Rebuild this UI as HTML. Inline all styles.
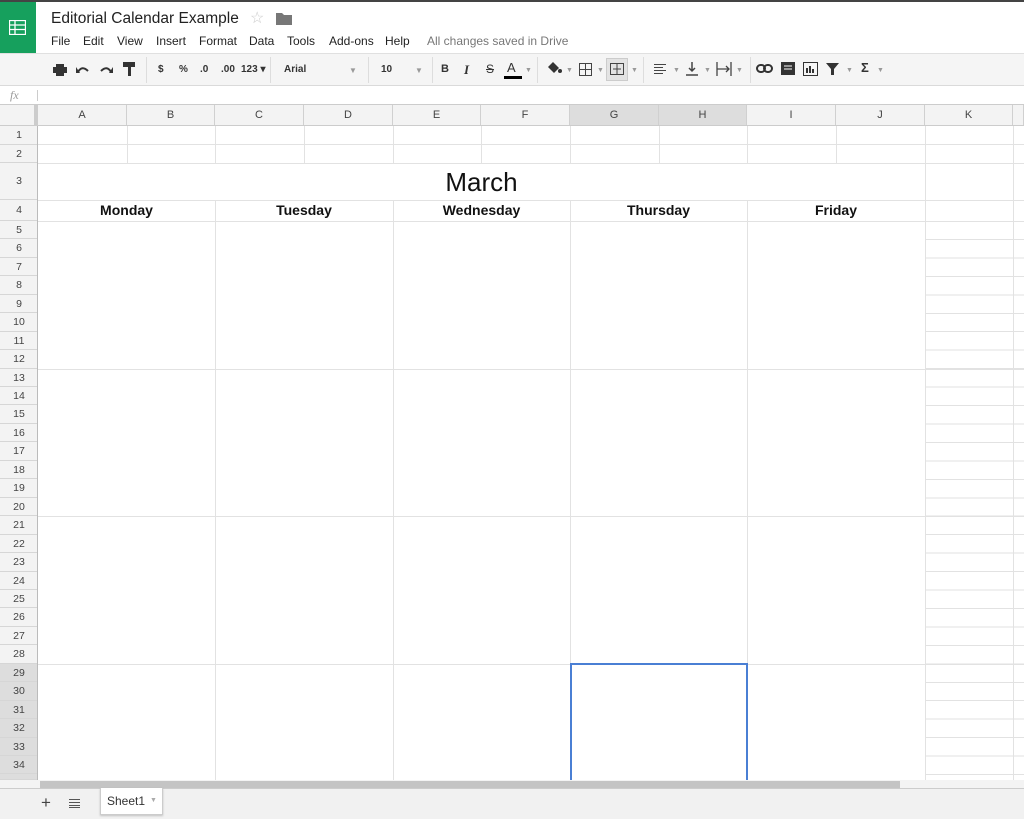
<!DOCTYPE html>
<html><head><meta charset="utf-8">
<style>
*{margin:0;padding:0;box-sizing:border-box}
body{width:1024px;height:819px;overflow:hidden;background:#fff;font-family:"Liberation Sans",Arial,sans-serif;position:relative}
.a{position:absolute}
.hl{position:absolute;height:1px;background:#e2e2e2}
.vl{position:absolute;width:1px;background:#e2e2e2}
.ch{position:absolute;top:105px;height:21px;font-size:11px;color:#444;text-align:center;line-height:21px;border-right:1px solid #d0d0d0;background:#f3f3f3}
.rh{position:absolute;left:0;width:38px;font-size:10.5px;color:#444;text-align:center;border-bottom:1px solid #d6d6d6;background:#f3f3f3}
.rh.s{background:#ddd}
.tb{position:absolute;top:62px;font-size:11px;color:#333}
.mn{position:absolute;top:34px;font-size:12px;color:#222}
.sep{position:absolute;top:57px;width:1px;height:26px;background:#ddd}
.day{position:absolute;top:200px;height:21px;line-height:21px;font-size:14px;font-weight:bold;text-align:center;color:#111}
</style></head><body>
<div class="a" style="left:0;top:0;width:1024px;height:2px;background:#444"></div>
<div class="a" style="left:0;top:2px;width:36px;height:51px;background:#16a05d"></div>
<svg class="a" style="left:9px;top:20px" width="17" height="15" viewBox="0 0 17 15"><rect x="0.5" y="0.5" width="16" height="14" fill="none" stroke="#fff" stroke-width="1.3"/><path d="M0.5 5H16.5M0.5 9.5H16.5M6 0.5V14.5" stroke="#fff" stroke-width="1.3"/></svg>
<div class="a" style="left:51px;top:10px;font-size:15.5px;color:#222">Editorial Calendar Example</div>
<div class="a" style="left:250px;top:8px;font-size:16px;color:#ccc">☆</div>
<svg class="a" style="left:276px;top:12px" width="16" height="13"><path d="M0 1h6l2 2h8v10H0z" fill="#777"/></svg>
<div class="mn" style="left:51px">File</div><div class="mn" style="left:83px">Edit</div><div class="mn" style="left:117px">View</div><div class="mn" style="left:156px">Insert</div><div class="mn" style="left:199px">Format</div><div class="mn" style="left:249px">Data</div><div class="mn" style="left:287px">Tools</div><div class="mn" style="left:329px">Add-ons</div><div class="mn" style="left:385px">Help</div><div class="mn" style="left:427px;color:#777">All changes saved in Drive</div>
<div class="a" style="left:0;top:53px;width:1024px;height:33px;background:#f5f5f5;border-top:1px solid #e0e0e0;border-bottom:1px solid #dadada"></div>
<svg class="a" style="left:53px;top:64px" width="14" height="12"><rect x="3" y="0" width="8" height="3" fill="#333"/><rect x="0" y="3" width="14" height="6" fill="#333"/><rect x="3" y="7" width="8" height="5" fill="#333"/></svg>
<svg class="a" style="left:76px;top:64px" width="14" height="10"><path d="M2 8Q6 1 12 7" stroke="#333" stroke-width="2" fill="none"/><path d="M0 3l4 6H0z" fill="#333"/></svg>
<svg class="a" style="left:99px;top:64px" width="14" height="10"><path d="M12 8Q8 1 2 7" stroke="#333" stroke-width="2" fill="none"/><path d="M14 3l-4 6h4z" fill="#333"/></svg>
<svg class="a" style="left:123px;top:62px" width="13" height="15"><rect x="0" y="0" width="12" height="5" fill="#333"/><rect x="5" y="5" width="3" height="9" fill="#333"/></svg>
<div class="sep" style="left:146px"></div>
<div class="tb" style="left:158px;font-weight:bold;font-size:10px;top:64px">$</div><div class="tb" style="left:179px;font-weight:bold;font-size:10px;top:64px">%</div><div class="tb" style="left:200px;font-weight:bold;font-size:10px;top:64px">.0</div><div class="tb" style="left:221px;font-weight:bold;font-size:10px;top:64px">.00</div><div class="tb" style="left:241px;font-weight:bold;font-size:10px;top:64px">123 ▾</div>
<div class="sep" style="left:270px"></div>
<div class="tb" style="left:284px;font-size:10px;font-weight:bold;top:64px">Arial</div><div class="tb" style="left:349px;font-size:8px;color:#999;top:66px">▼</div>
<div class="sep" style="left:368px"></div>
<div class="tb" style="left:381px;font-size:10px;font-weight:bold;top:64px">10</div><div class="tb" style="left:415px;font-size:8px;color:#999;top:66px">▼</div>
<div class="sep" style="left:432px"></div>
<div class="tb" style="left:441px;font-weight:bold;top:63px">B</div><div class="tb" style="left:464px;font-style:italic;font-weight:bold;font-family:'Liberation Serif';font-size:13px;top:62px">I</div><div class="tb" style="left:486px;text-decoration:line-through;top:62px;font-size:12px">S</div>
<div class="tb" style="left:507px;font-size:13px;top:60px">A</div><div class="a" style="left:504px;top:76px;width:18px;height:3px;background:#000"></div><div class="tb" style="left:525px;font-size:7px;color:#999;top:67px">▼</div>
<div class="sep" style="left:537px"></div>
<svg class="a" style="left:546px;top:61px" width="16" height="14"><path d="M2 6l5-5 6 6-5 5z" fill="#333"/><circle cx="14" cy="10" r="2" fill="#333"/></svg><div class="tb" style="left:566px;font-size:7px;color:#999;top:67px">▼</div>
<svg class="a" style="left:579px;top:63px" width="13" height="13"><path d="M.5.5h12v12H.5zM6.5.5v12M.5 6.5h12" fill="none" stroke="#444"/></svg><div class="tb" style="left:597px;font-size:7px;color:#999;top:67px">▼</div>
<div class="a" style="left:606px;top:58px;width:22px;height:23px;background:#e3e3e3;border:1px solid #ccc"></div>
<svg class="a" style="left:610px;top:63px" width="14" height="12"><path d="M.5.5h13v11H.5zM7 .5v11" fill="none" stroke="#444"/><path d="M3 6h8" stroke="#444"/></svg><div class="tb" style="left:631px;font-size:7px;color:#999;top:67px">▼</div>
<div class="sep" style="left:643px"></div>
<svg class="a" style="left:654px;top:64px" width="12" height="10"><path d="M0 .5h12M0 3.5h9M0 6.5h12M0 9.5h9" stroke="#444"/></svg><div class="tb" style="left:673px;font-size:7px;color:#999;top:67px">▼</div>
<svg class="a" style="left:686px;top:62px" width="12" height="14"><path d="M6 0v9M3 6l3 3 3-3M0 13h12" stroke="#444" fill="none" stroke-width="1.5"/></svg><div class="tb" style="left:704px;font-size:7px;color:#999;top:67px">▼</div>
<svg class="a" style="left:716px;top:62px" width="16" height="14"><path d="M1 0v14M15 0v14M1 7h12M10 4l3 3-3 3" stroke="#444" fill="none" stroke-width="1.3"/></svg><div class="tb" style="left:736px;font-size:7px;color:#999;top:67px">▼</div>
<div class="sep" style="left:750px"></div>
<svg class="a" style="left:756px;top:64px" width="17" height="9"><rect x="1" y="1" width="8" height="7" rx="3.5" fill="none" stroke="#333" stroke-width="2"/><rect x="8" y="1" width="8" height="7" rx="3.5" fill="none" stroke="#333" stroke-width="2"/></svg>
<svg class="a" style="left:781px;top:62px" width="14" height="13"><rect width="14" height="13" fill="#333"/><path d="M3 4h8M3 7h8" stroke="#fff"/></svg>
<svg class="a" style="left:803px;top:62px" width="15" height="14"><rect x=".5" y=".5" width="14" height="13" fill="none" stroke="#333"/><path d="M4 11V6M7 11V4M10 11V7" stroke="#333" stroke-width="2"/></svg>
<svg class="a" style="left:826px;top:63px" width="13" height="12"><path d="M0 0h13L8 6v6H5V6z" fill="#333"/></svg><div class="tb" style="left:846px;font-size:7px;color:#999;top:67px">▼</div>
<div class="tb" style="left:861px;font-size:13px;top:60px;font-weight:bold">Σ</div><div class="tb" style="left:877px;font-size:7px;color:#999;top:67px">▼</div>
<div class="a" style="left:0;top:86px;width:1024px;height:19px;background:#fff;border-bottom:1px solid #ccc"></div>
<div class="a" style="left:10px;top:88px;font-size:12px;font-style:italic;color:#999;font-family:'Liberation Serif'">fx</div>
<div class="a" style="left:37px;top:90px;width:1px;height:11px;background:#ccc"></div>
<div class="a" style="left:0;top:105px;width:38px;height:21px;background:#f3f3f3;border-right:4px solid #ccc;border-bottom:1px solid #ccc"></div>
<div class="ch" style="left:38px;width:89px">A</div><div class="ch" style="left:127px;width:88px">B</div><div class="ch" style="left:215px;width:89px">C</div><div class="ch" style="left:304px;width:89px">D</div><div class="ch" style="left:393px;width:88px">E</div><div class="ch" style="left:481px;width:89px">F</div><div class="ch" style="left:570px;width:89px;background:#ddd">G</div><div class="ch" style="left:659px;width:88px;background:#ddd">H</div><div class="ch" style="left:747px;width:89px">I</div><div class="ch" style="left:836px;width:89px">J</div><div class="ch" style="left:925px;width:88px">K</div><div class="ch" style="left:1013px;width:11px"></div>
<div class="a" style="left:0;top:125px;width:1024px;height:1px;background:#ccc"></div>
<div class="rh" style="top:126px;height:19px;line-height:19px">1</div>
<div class="rh" style="top:145px;height:18px;line-height:18px">2</div>
<div class="rh" style="top:163px;height:37px;line-height:37px">3</div>
<div class="rh" style="top:200px;height:21px;line-height:21px">4</div>
<div class="rh" style="top:221px;height:18px;line-height:18px">5</div>
<div class="rh" style="top:239px;height:19px;line-height:19px">6</div>
<div class="rh" style="top:258px;height:18px;line-height:18px">7</div>
<div class="rh" style="top:276px;height:19px;line-height:19px">8</div>
<div class="rh" style="top:295px;height:18px;line-height:18px">9</div>
<div class="rh" style="top:313px;height:19px;line-height:19px">10</div>
<div class="rh" style="top:332px;height:18px;line-height:18px">11</div>
<div class="rh" style="top:350px;height:19px;line-height:19px">12</div>
<div class="rh" style="top:369px;height:18px;line-height:18px">13</div>
<div class="rh" style="top:387px;height:18px;line-height:18px">14</div>
<div class="rh" style="top:405px;height:19px;line-height:19px">15</div>
<div class="rh" style="top:424px;height:18px;line-height:18px">16</div>
<div class="rh" style="top:442px;height:19px;line-height:19px">17</div>
<div class="rh" style="top:461px;height:18px;line-height:18px">18</div>
<div class="rh" style="top:479px;height:19px;line-height:19px">19</div>
<div class="rh" style="top:498px;height:18px;line-height:18px">20</div>
<div class="rh" style="top:516px;height:19px;line-height:19px">21</div>
<div class="rh" style="top:535px;height:18px;line-height:18px">22</div>
<div class="rh" style="top:553px;height:19px;line-height:19px">23</div>
<div class="rh" style="top:572px;height:18px;line-height:18px">24</div>
<div class="rh" style="top:590px;height:18px;line-height:18px">25</div>
<div class="rh" style="top:608px;height:19px;line-height:19px">26</div>
<div class="rh" style="top:627px;height:18px;line-height:18px">27</div>
<div class="rh" style="top:645px;height:19px;line-height:19px">28</div>
<div class="rh s" style="top:664px;height:18px;line-height:18px">29</div>
<div class="rh s" style="top:682px;height:19px;line-height:19px">30</div>
<div class="rh s" style="top:701px;height:18px;line-height:18px">31</div>
<div class="rh s" style="top:719px;height:19px;line-height:19px">32</div>
<div class="rh s" style="top:738px;height:18px;line-height:18px">33</div>
<div class="rh s" style="top:756px;height:18px;line-height:18px">34</div>
<div class="rh s" style="top:774px;height:6px"></div>
<div class="a" style="left:37px;top:126px;width:1px;height:654px;background:#bbb"></div>
<div class="hl" style="left:38px;top:144px;width:986px"></div>
<div class="hl" style="left:38px;top:163px;width:986px"></div>
<div class="hl" style="left:38px;top:200px;width:986px"></div>
<div class="hl" style="left:38px;top:221px;width:986px"></div>
<div class="vl" style="left:127px;top:126px;height:37px"></div><div class="vl" style="left:304px;top:126px;height:37px"></div><div class="vl" style="left:481px;top:126px;height:37px"></div><div class="vl" style="left:659px;top:126px;height:37px"></div><div class="vl" style="left:836px;top:126px;height:37px"></div>
<div class="vl" style="left:215px;top:126px;height:37px"></div><div class="vl" style="left:393px;top:126px;height:37px"></div><div class="vl" style="left:570px;top:126px;height:37px"></div><div class="vl" style="left:747px;top:126px;height:37px"></div>
<div class="vl" style="left:215px;top:200px;height:580px"></div><div class="vl" style="left:393px;top:200px;height:580px"></div><div class="vl" style="left:570px;top:200px;height:580px"></div><div class="vl" style="left:747px;top:200px;height:580px"></div>
<div class="vl" style="left:925px;top:126px;height:654px"></div><div class="vl" style="left:1013px;top:126px;height:654px"></div>
<div class="hl" style="left:38px;top:369px;width:986px"></div>
<div class="hl" style="left:38px;top:516px;width:986px"></div>
<div class="hl" style="left:38px;top:664px;width:986px"></div>
<div class="a" style="left:926px;top:239px;width:98px;height:541px;background:repeating-linear-gradient(to bottom,#e2e2e2 0,#e2e2e2 1px,transparent 1px,transparent 18.45px)"></div>
<div class="a" style="left:38px;top:167px;width:887px;text-align:center;font-size:26px;color:#111">March</div>
<div class="day" style="left:38px;width:177px">Monday</div><div class="day" style="left:215px;width:178px">Tuesday</div><div class="day" style="left:393px;width:177px">Wednesday</div><div class="day" style="left:570px;width:177px">Thursday</div><div class="day" style="left:747px;width:178px">Friday</div>
<div class="a" style="left:570px;top:663px;width:178px;height:120px;border:2px solid #4a7fd4;border-bottom:none"></div>
<div class="a" style="left:0;top:780px;width:1024px;height:8px;background:#f3f3f3"></div>
<div class="a" style="left:40px;top:781px;width:860px;height:7px;background:#c4c4c4"></div>
<div class="a" style="left:0;top:788px;width:1024px;height:31px;background:#f1f1f1;border-top:1px solid #ccc"></div>
<div class="a" style="left:41px;top:793px;font-size:17px;color:#444">+</div>
<svg class="a" style="left:69px;top:799px" width="11" height="9"><path d="M0 .5h11M0 3.5h11M0 6.5h11M0 8.5h11" stroke="#555"/></svg>
<div class="a" style="left:100px;top:788px;width:63px;height:27px;background:#fff;border:1px solid #ccc;border-top:none;box-shadow:0 1px 2px rgba(0,0,0,.2)"></div>
<div class="a" style="left:107px;top:794px;font-size:12px;color:#333">Sheet1</div><div class="a" style="left:150px;top:797px;font-size:7px;color:#aaa">▼</div>
</body></html>
